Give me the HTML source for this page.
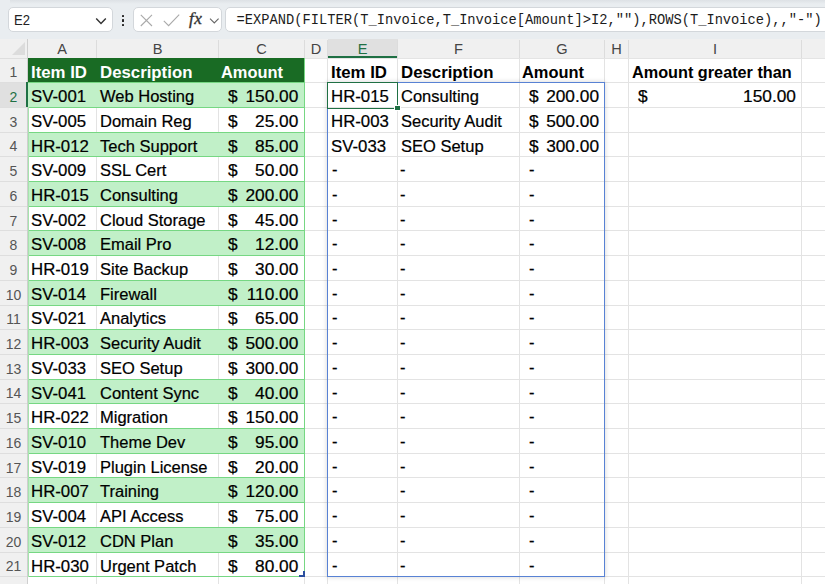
<!DOCTYPE html>
<html lang="en"><head><meta charset="utf-8"><title>Excel – EXPAND FILTER</title>
<style>
html,body{margin:0;padding:0}
body{width:825px;height:584px;overflow:hidden;background:#fff;position:relative;font-family:"Liberation Sans",sans-serif;color:#000}
.abs,.t,.b,.rn,.cl,.hl,.vl,.band{position:absolute}
.t,.b{white-space:nowrap;font-size:17.3px;line-height:20.0px;height:20.0px;transform-origin:0 50%}
.t{-webkit-text-stroke:.22px #000}
.b{font-weight:bold}
.r{transform-origin:100% 50%}
.w{color:#fff}
.rn{left:0;width:27px;text-align:center;font-size:14px;color:#555;line-height:18px;height:18px}
.cl{top:40.2px;text-align:center;font-size:14.6px;color:#444;line-height:18px;height:18px}
.hl{height:1px;background:#e3e3e3}
.vl{width:1px;background:#e3e3e3}
.band{background:#c1f0c8}
#topbar{left:0;top:0;width:825px;height:39px;background:#e9edf0}
#topshade{left:10px;top:0;width:815px;height:4px;background:linear-gradient(#dde1e5,#e9edf0)}
.box{background:#fff;border-radius:5px;border:1px solid #d3d7db;box-sizing:border-box}
#formula{font-family:"Liberation Mono","DejaVu Sans Mono",monospace;font-size:13.74px;white-space:pre;line-height:24px;color:#1c1c1c}
</style></head><body>

<div class="abs" id="topbar"></div><div class="abs" id="topshade"></div>
<div class="abs box" style="left:8.3px;top:7.4px;width:104.6px;height:24.3px"></div>
<div class="abs" style="left:14.3px;top:10.6px;font-size:14px;line-height:18px;color:#222;transform:scaleX(.93);transform-origin:0 50%">E2</div>
<svg class="abs" style="left:94px;top:15.4px" width="14" height="12" viewBox="0 0 14 12"><path d="M2.2 3.6 L7 8.4 L11.8 3.6" fill="none" stroke="#333" stroke-width="1.45"/></svg>
<div class="abs" style="left:121.9px;top:15.1px;width:2.4px;height:2.4px;background:#262626;border-radius:.5px"></div>
<div class="abs" style="left:121.9px;top:19.3px;width:2.4px;height:2.4px;background:#262626;border-radius:.5px"></div>
<div class="abs" style="left:121.9px;top:23.5px;width:2.4px;height:2.4px;background:#262626;border-radius:.5px"></div>
<div class="abs box" style="left:133.4px;top:7.4px;width:88.2px;height:24.3px"></div>
<svg class="abs" style="left:134px;top:7.6px" width="87" height="24" viewBox="0 0 87 24"><path d="M6.8 6.8 L18 18 M18 6.8 L6.8 18" stroke="#a9a9a9" stroke-width="1.1" fill="none"/><path d="M29.8 12.8 L34.6 17.6 L45.2 6.6" stroke="#a9a9a9" stroke-width="1.1" fill="none"/><path d="M76 10.6 L80.3 14.9 L84.6 10.6" stroke="#666" stroke-width="1.1" fill="none"/></svg>
<div class="abs" style="left:188.9px;top:8.8px;font-family:'Liberation Serif',serif;font-style:italic;font-weight:normal;-webkit-text-stroke:.35px #333;font-size:17.2px;line-height:20px;color:#333;letter-spacing:.5px">fx</div>
<div class="abs box" style="left:225.3px;top:7.4px;width:620px;height:24.3px"></div>
<div class="abs" id="formula" style="left:236.6px;top:9px">=EXPAND(FILTER(T_Invoice,T_Invoice[Amount]&gt;I2,&quot;&quot;),ROWS(T_Invoice),,&quot;-&quot;)</div>
<div class="abs" style="left:0;top:39.0px;width:825px;height:19.0px;background:#f0f0f0"></div>
<div class="abs" style="left:0;top:39.0px;width:27.5px;height:545.0px;background:#f0f0f0"></div>
<svg class="abs" style="left:12px;top:42px" width="13" height="13" viewBox="0 0 13 13"><path d="M13 0 V13 H0 Z" fill="#dcdcdc"/></svg>
<div class="abs" style="left:327.7px;top:39.0px;width:70.0px;height:19.0px;background:#e0e0e0;border-bottom:2px solid #1f7044;box-sizing:border-box"></div>
<div class="abs" style="left:0;top:82.7px;width:28.1px;height:24.7px;background:#e0e0e0;border-right:2px solid #1f7044;box-sizing:border-box"></div>
<div class="cl" style="left:27.5px;width:69.0px;color:#444">A</div>
<div class="cl" style="left:96.5px;width:122.2px;color:#444">B</div>
<div class="vl" style="left:96.0px;top:40.0px;height:18.0px;background:#dcdcdc"></div>
<div class="cl" style="left:218.7px;width:85.8px;color:#444">C</div>
<div class="vl" style="left:218.2px;top:40.0px;height:18.0px;background:#dcdcdc"></div>
<div class="cl" style="left:304.5px;width:23.2px;color:#444">D</div>
<div class="vl" style="left:304.0px;top:40.0px;height:18.0px;background:#dcdcdc"></div>
<div class="cl" style="left:327.7px;width:70.0px;color:#1f7044">E</div>
<div class="vl" style="left:327.2px;top:40.0px;height:18.0px;background:#dcdcdc"></div>
<div class="cl" style="left:397.7px;width:121.6px;color:#444">F</div>
<div class="vl" style="left:397.2px;top:40.0px;height:18.0px;background:#dcdcdc"></div>
<div class="cl" style="left:519.3px;width:85.5px;color:#444">G</div>
<div class="vl" style="left:518.8px;top:40.0px;height:18.0px;background:#dcdcdc"></div>
<div class="cl" style="left:604.8px;width:23.7px;color:#444">H</div>
<div class="vl" style="left:604.3px;top:40.0px;height:18.0px;background:#dcdcdc"></div>
<div class="cl" style="left:628.5px;width:172.9px;color:#444">I</div>
<div class="vl" style="left:628.0px;top:40.0px;height:18.0px;background:#dcdcdc"></div>
<div class="cl" style="left:801.4px;width:98.6px;color:#444">J</div>
<div class="vl" style="left:800.9px;top:40.0px;height:18.0px;background:#dcdcdc"></div>
<div class="rn" style="top:63.0px;color:#555">1</div>
<div class="hl" style="left:0;top:57.5px;width:27px;background:#dedede"></div>
<div class="rn" style="top:88.0px;color:#1f7044">2</div>
<div class="hl" style="left:0;top:82.2px;width:27px;background:#dedede"></div>
<div class="rn" style="top:113.0px;color:#555">3</div>
<div class="hl" style="left:0;top:106.9px;width:27px;background:#dedede"></div>
<div class="rn" style="top:137.0px;color:#555">4</div>
<div class="hl" style="left:0;top:131.6px;width:27px;background:#dedede"></div>
<div class="rn" style="top:162.0px;color:#555">5</div>
<div class="hl" style="left:0;top:156.3px;width:27px;background:#dedede"></div>
<div class="rn" style="top:187.0px;color:#555">6</div>
<div class="hl" style="left:0;top:181.0px;width:27px;background:#dedede"></div>
<div class="rn" style="top:212.0px;color:#555">7</div>
<div class="hl" style="left:0;top:205.7px;width:27px;background:#dedede"></div>
<div class="rn" style="top:236.0px;color:#555">8</div>
<div class="hl" style="left:0;top:230.4px;width:27px;background:#dedede"></div>
<div class="rn" style="top:261.0px;color:#555">9</div>
<div class="hl" style="left:0;top:255.1px;width:27px;background:#dedede"></div>
<div class="rn" style="top:286.0px;color:#555">10</div>
<div class="hl" style="left:0;top:279.8px;width:27px;background:#dedede"></div>
<div class="rn" style="top:310.0px;color:#555">11</div>
<div class="hl" style="left:0;top:304.5px;width:27px;background:#dedede"></div>
<div class="rn" style="top:335.0px;color:#555">12</div>
<div class="hl" style="left:0;top:329.2px;width:27px;background:#dedede"></div>
<div class="rn" style="top:360.0px;color:#555">13</div>
<div class="hl" style="left:0;top:353.9px;width:27px;background:#dedede"></div>
<div class="rn" style="top:384.0px;color:#555">14</div>
<div class="hl" style="left:0;top:378.6px;width:27px;background:#dedede"></div>
<div class="rn" style="top:409.0px;color:#555">15</div>
<div class="hl" style="left:0;top:403.3px;width:27px;background:#dedede"></div>
<div class="rn" style="top:434.0px;color:#555">16</div>
<div class="hl" style="left:0;top:428.0px;width:27px;background:#dedede"></div>
<div class="rn" style="top:459.0px;color:#555">17</div>
<div class="hl" style="left:0;top:452.7px;width:27px;background:#dedede"></div>
<div class="rn" style="top:483.0px;color:#555">18</div>
<div class="hl" style="left:0;top:477.4px;width:27px;background:#dedede"></div>
<div class="rn" style="top:508.0px;color:#555">19</div>
<div class="hl" style="left:0;top:502.1px;width:27px;background:#dedede"></div>
<div class="rn" style="top:533.0px;color:#555">20</div>
<div class="hl" style="left:0;top:526.8px;width:27px;background:#dedede"></div>
<div class="rn" style="top:557.0px;color:#555">21</div>
<div class="hl" style="left:0;top:551.5px;width:27px;background:#dedede"></div>
<div class="rn" style="top:582.0px;color:#555">22</div>
<div class="hl" style="left:0;top:576.2px;width:27px;background:#dedede"></div>
<div class="vl" style="left:27px;top:39.0px;height:545.0px;background:#cfcfcf"></div>
<div class="hl" style="left:27.5px;top:57.5px;width:800px;background:#e4e4e4"></div>
<div class="hl" style="left:27.5px;top:82.2px;width:800px"></div>
<div class="hl" style="left:27.5px;top:106.9px;width:800px"></div>
<div class="hl" style="left:27.5px;top:131.6px;width:800px"></div>
<div class="hl" style="left:27.5px;top:156.3px;width:800px"></div>
<div class="hl" style="left:27.5px;top:181.0px;width:800px"></div>
<div class="hl" style="left:27.5px;top:205.7px;width:800px"></div>
<div class="hl" style="left:27.5px;top:230.4px;width:800px"></div>
<div class="hl" style="left:27.5px;top:255.1px;width:800px"></div>
<div class="hl" style="left:27.5px;top:279.8px;width:800px"></div>
<div class="hl" style="left:27.5px;top:304.5px;width:800px"></div>
<div class="hl" style="left:27.5px;top:329.2px;width:800px"></div>
<div class="hl" style="left:27.5px;top:353.9px;width:800px"></div>
<div class="hl" style="left:27.5px;top:378.6px;width:800px"></div>
<div class="hl" style="left:27.5px;top:403.3px;width:800px"></div>
<div class="hl" style="left:27.5px;top:428.0px;width:800px"></div>
<div class="hl" style="left:27.5px;top:452.7px;width:800px"></div>
<div class="hl" style="left:27.5px;top:477.4px;width:800px"></div>
<div class="hl" style="left:27.5px;top:502.1px;width:800px"></div>
<div class="hl" style="left:27.5px;top:526.8px;width:800px"></div>
<div class="hl" style="left:27.5px;top:551.5px;width:800px"></div>
<div class="hl" style="left:27.5px;top:576.2px;width:800px"></div>
<div class="hl" style="left:27.5px;top:600.9px;width:800px"></div>
<div class="vl" style="left:96.0px;top:58.0px;height:526.0px"></div>
<div class="vl" style="left:218.2px;top:58.0px;height:526.0px"></div>
<div class="vl" style="left:304.0px;top:58.0px;height:526.0px"></div>
<div class="vl" style="left:327.2px;top:58.0px;height:526.0px"></div>
<div class="vl" style="left:397.2px;top:58.0px;height:526.0px"></div>
<div class="vl" style="left:518.8px;top:58.0px;height:526.0px"></div>
<div class="vl" style="left:604.3px;top:58.0px;height:526.0px"></div>
<div class="vl" style="left:628.0px;top:58.0px;height:526.0px"></div>
<div class="vl" style="left:800.9px;top:58.0px;height:526.0px"></div>
<div class="abs" style="left:28.0px;top:58.0px;width:276.5px;height:24.7px;background:#196b24"></div>
<div class="band" style="left:28.0px;top:82.7px;width:276.5px;height:24.7px"></div>
<div class="band" style="left:28.0px;top:132.1px;width:276.5px;height:24.7px"></div>
<div class="band" style="left:28.0px;top:181.5px;width:276.5px;height:24.7px"></div>
<div class="band" style="left:28.0px;top:230.9px;width:276.5px;height:24.7px"></div>
<div class="band" style="left:28.0px;top:280.3px;width:276.5px;height:24.7px"></div>
<div class="band" style="left:28.0px;top:329.7px;width:276.5px;height:24.7px"></div>
<div class="band" style="left:28.0px;top:379.1px;width:276.5px;height:24.7px"></div>
<div class="band" style="left:28.0px;top:428.5px;width:276.5px;height:24.7px"></div>
<div class="band" style="left:28.0px;top:477.9px;width:276.5px;height:24.7px"></div>
<div class="band" style="left:28.0px;top:527.3px;width:276.5px;height:24.7px"></div>
<div class="hl" style="left:28.0px;top:82.2px;width:277.0px;background:#76d783"></div>
<div class="hl" style="left:28.0px;top:106.9px;width:277.0px;background:#76d783"></div>
<div class="hl" style="left:28.0px;top:131.6px;width:277.0px;background:#76d783"></div>
<div class="hl" style="left:28.0px;top:156.3px;width:277.0px;background:#76d783"></div>
<div class="hl" style="left:28.0px;top:181.0px;width:277.0px;background:#76d783"></div>
<div class="hl" style="left:28.0px;top:205.7px;width:277.0px;background:#76d783"></div>
<div class="hl" style="left:28.0px;top:230.4px;width:277.0px;background:#76d783"></div>
<div class="hl" style="left:28.0px;top:255.1px;width:277.0px;background:#76d783"></div>
<div class="hl" style="left:28.0px;top:279.8px;width:277.0px;background:#76d783"></div>
<div class="hl" style="left:28.0px;top:304.5px;width:277.0px;background:#76d783"></div>
<div class="hl" style="left:28.0px;top:329.2px;width:277.0px;background:#76d783"></div>
<div class="hl" style="left:28.0px;top:353.9px;width:277.0px;background:#76d783"></div>
<div class="hl" style="left:28.0px;top:378.6px;width:277.0px;background:#76d783"></div>
<div class="hl" style="left:28.0px;top:403.3px;width:277.0px;background:#76d783"></div>
<div class="hl" style="left:28.0px;top:428.0px;width:277.0px;background:#76d783"></div>
<div class="hl" style="left:28.0px;top:452.7px;width:277.0px;background:#76d783"></div>
<div class="hl" style="left:28.0px;top:477.4px;width:277.0px;background:#76d783"></div>
<div class="hl" style="left:28.0px;top:502.1px;width:277.0px;background:#76d783"></div>
<div class="hl" style="left:28.0px;top:526.8px;width:277.0px;background:#76d783"></div>
<div class="hl" style="left:28.0px;top:551.5px;width:277.0px;background:#76d783"></div>
<div class="hl" style="left:28.0px;top:576.2px;width:277.0px;background:#76d783"></div>
<div class="vl" style="left:304.0px;top:58.0px;height:518.7px;background:#76d783"></div>
<div class="vl" style="left:27.5px;top:107.4px;height:469.3px;background:#a6e3ad"></div>
<svg class="abs" style="left:298.5px;top:570.5px" width="6" height="6" viewBox="0 0 6 6"><path d="M4 0 H6 V6 H0 V4 H4 Z" fill="#2b4f9e"/></svg>
<div class="b w" style="left:30.8px;top:62.00px;transform:scaleX(0.972)">Item ID</div>
<div class="b w" style="left:100.1px;top:62.00px;transform:scaleX(0.972)">Description</div>
<div class="b w" style="left:221.2px;top:62.00px;transform:scaleX(0.950)">Amount</div>
<div class="t" style="left:30.6px;top:86.00px;transform:scaleX(0.972)">SV-001</div>
<div class="t" style="left:100.1px;top:86.00px;transform:scaleX(0.955)">Web Hosting</div>
<div class="t" style="left:228.0px;top:86.00px;transform:scaleX(1.000)">$</div>
<div class="t r" style="right:526.7px;top:86.00px;transform:scaleX(1.000)">150.00</div>
<div class="t" style="left:30.6px;top:111.00px;transform:scaleX(0.972)">SV-005</div>
<div class="t" style="left:100.1px;top:111.00px;transform:scaleX(0.955)">Domain Reg</div>
<div class="t" style="left:228.0px;top:111.00px;transform:scaleX(1.000)">$</div>
<div class="t r" style="right:526.7px;top:111.00px;transform:scaleX(1.000)">25.00</div>
<div class="t" style="left:30.6px;top:136.00px;transform:scaleX(0.972)">HR-012</div>
<div class="t" style="left:100.1px;top:136.00px;transform:scaleX(0.955)">Tech Support</div>
<div class="t" style="left:228.0px;top:136.00px;transform:scaleX(1.000)">$</div>
<div class="t r" style="right:526.7px;top:136.00px;transform:scaleX(1.000)">85.00</div>
<div class="t" style="left:30.6px;top:160.00px;transform:scaleX(0.972)">SV-009</div>
<div class="t" style="left:100.1px;top:160.00px;transform:scaleX(0.955)">SSL Cert</div>
<div class="t" style="left:228.0px;top:160.00px;transform:scaleX(1.000)">$</div>
<div class="t r" style="right:526.7px;top:160.00px;transform:scaleX(1.000)">50.00</div>
<div class="t" style="left:30.6px;top:185.00px;transform:scaleX(0.972)">HR-015</div>
<div class="t" style="left:100.1px;top:185.00px;transform:scaleX(0.955)">Consulting</div>
<div class="t" style="left:228.0px;top:185.00px;transform:scaleX(1.000)">$</div>
<div class="t r" style="right:526.7px;top:185.00px;transform:scaleX(1.000)">200.00</div>
<div class="t" style="left:30.6px;top:210.00px;transform:scaleX(0.972)">SV-002</div>
<div class="t" style="left:100.1px;top:210.00px;transform:scaleX(0.955)">Cloud Storage</div>
<div class="t" style="left:228.0px;top:210.00px;transform:scaleX(1.000)">$</div>
<div class="t r" style="right:526.7px;top:210.00px;transform:scaleX(1.000)">45.00</div>
<div class="t" style="left:30.6px;top:234.00px;transform:scaleX(0.972)">SV-008</div>
<div class="t" style="left:100.1px;top:234.00px;transform:scaleX(0.955)">Email Pro</div>
<div class="t" style="left:228.0px;top:234.00px;transform:scaleX(1.000)">$</div>
<div class="t r" style="right:526.7px;top:234.00px;transform:scaleX(1.000)">12.00</div>
<div class="t" style="left:30.6px;top:259.00px;transform:scaleX(0.972)">HR-019</div>
<div class="t" style="left:100.1px;top:259.00px;transform:scaleX(0.955)">Site Backup</div>
<div class="t" style="left:228.0px;top:259.00px;transform:scaleX(1.000)">$</div>
<div class="t r" style="right:526.7px;top:259.00px;transform:scaleX(1.000)">30.00</div>
<div class="t" style="left:30.6px;top:284.00px;transform:scaleX(0.972)">SV-014</div>
<div class="t" style="left:100.1px;top:284.00px;transform:scaleX(0.955)">Firewall</div>
<div class="t" style="left:228.0px;top:284.00px;transform:scaleX(1.000)">$</div>
<div class="t r" style="right:526.7px;top:284.00px;transform:scaleX(1.000)">110.00</div>
<div class="t" style="left:30.6px;top:308.00px;transform:scaleX(0.972)">SV-021</div>
<div class="t" style="left:100.1px;top:308.00px;transform:scaleX(0.955)">Analytics</div>
<div class="t" style="left:228.0px;top:308.00px;transform:scaleX(1.000)">$</div>
<div class="t r" style="right:526.7px;top:308.00px;transform:scaleX(1.000)">65.00</div>
<div class="t" style="left:30.6px;top:333.00px;transform:scaleX(0.972)">HR-003</div>
<div class="t" style="left:100.1px;top:333.00px;transform:scaleX(0.955)">Security Audit</div>
<div class="t" style="left:228.0px;top:333.00px;transform:scaleX(1.000)">$</div>
<div class="t r" style="right:526.7px;top:333.00px;transform:scaleX(1.000)">500.00</div>
<div class="t" style="left:30.6px;top:358.00px;transform:scaleX(0.972)">SV-033</div>
<div class="t" style="left:100.1px;top:358.00px;transform:scaleX(0.955)">SEO Setup</div>
<div class="t" style="left:228.0px;top:358.00px;transform:scaleX(1.000)">$</div>
<div class="t r" style="right:526.7px;top:358.00px;transform:scaleX(1.000)">300.00</div>
<div class="t" style="left:30.6px;top:383.00px;transform:scaleX(0.972)">SV-041</div>
<div class="t" style="left:100.1px;top:383.00px;transform:scaleX(0.955)">Content Sync</div>
<div class="t" style="left:228.0px;top:383.00px;transform:scaleX(1.000)">$</div>
<div class="t r" style="right:526.7px;top:383.00px;transform:scaleX(1.000)">40.00</div>
<div class="t" style="left:30.6px;top:407.00px;transform:scaleX(0.972)">HR-022</div>
<div class="t" style="left:100.1px;top:407.00px;transform:scaleX(0.955)">Migration</div>
<div class="t" style="left:228.0px;top:407.00px;transform:scaleX(1.000)">$</div>
<div class="t r" style="right:526.7px;top:407.00px;transform:scaleX(1.000)">150.00</div>
<div class="t" style="left:30.6px;top:432.00px;transform:scaleX(0.972)">SV-010</div>
<div class="t" style="left:100.1px;top:432.00px;transform:scaleX(0.955)">Theme Dev</div>
<div class="t" style="left:228.0px;top:432.00px;transform:scaleX(1.000)">$</div>
<div class="t r" style="right:526.7px;top:432.00px;transform:scaleX(1.000)">95.00</div>
<div class="t" style="left:30.6px;top:457.00px;transform:scaleX(0.972)">SV-019</div>
<div class="t" style="left:100.1px;top:457.00px;transform:scaleX(0.955)">Plugin License</div>
<div class="t" style="left:228.0px;top:457.00px;transform:scaleX(1.000)">$</div>
<div class="t r" style="right:526.7px;top:457.00px;transform:scaleX(1.000)">20.00</div>
<div class="t" style="left:30.6px;top:481.00px;transform:scaleX(0.972)">HR-007</div>
<div class="t" style="left:100.1px;top:481.00px;transform:scaleX(0.955)">Training</div>
<div class="t" style="left:228.0px;top:481.00px;transform:scaleX(1.000)">$</div>
<div class="t r" style="right:526.7px;top:481.00px;transform:scaleX(1.000)">120.00</div>
<div class="t" style="left:30.6px;top:506.00px;transform:scaleX(0.972)">SV-004</div>
<div class="t" style="left:100.1px;top:506.00px;transform:scaleX(0.955)">API Access</div>
<div class="t" style="left:228.0px;top:506.00px;transform:scaleX(1.000)">$</div>
<div class="t r" style="right:526.7px;top:506.00px;transform:scaleX(1.000)">75.00</div>
<div class="t" style="left:30.6px;top:531.00px;transform:scaleX(0.972)">SV-012</div>
<div class="t" style="left:100.1px;top:531.00px;transform:scaleX(0.955)">CDN Plan</div>
<div class="t" style="left:228.0px;top:531.00px;transform:scaleX(1.000)">$</div>
<div class="t r" style="right:526.7px;top:531.00px;transform:scaleX(1.000)">35.00</div>
<div class="t" style="left:30.6px;top:556.00px;transform:scaleX(0.972)">HR-030</div>
<div class="t" style="left:100.1px;top:556.00px;transform:scaleX(0.955)">Urgent Patch</div>
<div class="t" style="left:228.0px;top:556.00px;transform:scaleX(1.000)">$</div>
<div class="t r" style="right:526.7px;top:556.00px;transform:scaleX(1.000)">80.00</div>
<div class="b" style="left:331.3px;top:62.00px;transform:scaleX(0.972)">Item ID</div>
<div class="b" style="left:400.5px;top:62.00px;transform:scaleX(0.972)">Description</div>
<div class="b" style="left:522.0px;top:62.00px;transform:scaleX(0.950)">Amount</div>
<div class="t" style="left:331.3px;top:86.00px;transform:scaleX(0.972)">HR-015</div>
<div class="t" style="left:400.5px;top:86.00px;transform:scaleX(0.955)">Consulting</div>
<div class="t" style="left:529.0px;top:86.00px;transform:scaleX(1.000)">$</div>
<div class="t r" style="right:226.0px;top:86.00px;transform:scaleX(1.000)">200.00</div>
<div class="t" style="left:331.3px;top:111.00px;transform:scaleX(0.972)">HR-003</div>
<div class="t" style="left:400.5px;top:111.00px;transform:scaleX(0.955)">Security Audit</div>
<div class="t" style="left:529.0px;top:111.00px;transform:scaleX(1.000)">$</div>
<div class="t r" style="right:226.0px;top:111.00px;transform:scaleX(1.000)">500.00</div>
<div class="t" style="left:331.3px;top:136.00px;transform:scaleX(0.972)">SV-033</div>
<div class="t" style="left:400.5px;top:136.00px;transform:scaleX(0.955)">SEO Setup</div>
<div class="t" style="left:529.0px;top:136.00px;transform:scaleX(1.000)">$</div>
<div class="t r" style="right:226.0px;top:136.00px;transform:scaleX(1.000)">300.00</div>
<div class="t" style="left:331.6px;top:160.00px;transform:scaleX(0.950);margin-top:-1px">-</div>
<div class="t" style="left:400.4px;top:160.00px;transform:scaleX(0.950);margin-top:-1px">-</div>
<div class="t" style="left:528.8px;top:160.00px;transform:scaleX(0.950);margin-top:-1px">-</div>
<div class="t" style="left:331.6px;top:185.00px;transform:scaleX(0.950);margin-top:-1px">-</div>
<div class="t" style="left:400.4px;top:185.00px;transform:scaleX(0.950);margin-top:-1px">-</div>
<div class="t" style="left:528.8px;top:185.00px;transform:scaleX(0.950);margin-top:-1px">-</div>
<div class="t" style="left:331.6px;top:210.00px;transform:scaleX(0.950);margin-top:-1px">-</div>
<div class="t" style="left:400.4px;top:210.00px;transform:scaleX(0.950);margin-top:-1px">-</div>
<div class="t" style="left:528.8px;top:210.00px;transform:scaleX(0.950);margin-top:-1px">-</div>
<div class="t" style="left:331.6px;top:234.00px;transform:scaleX(0.950);margin-top:-1px">-</div>
<div class="t" style="left:400.4px;top:234.00px;transform:scaleX(0.950);margin-top:-1px">-</div>
<div class="t" style="left:528.8px;top:234.00px;transform:scaleX(0.950);margin-top:-1px">-</div>
<div class="t" style="left:331.6px;top:259.00px;transform:scaleX(0.950);margin-top:-1px">-</div>
<div class="t" style="left:400.4px;top:259.00px;transform:scaleX(0.950);margin-top:-1px">-</div>
<div class="t" style="left:528.8px;top:259.00px;transform:scaleX(0.950);margin-top:-1px">-</div>
<div class="t" style="left:331.6px;top:284.00px;transform:scaleX(0.950);margin-top:-1px">-</div>
<div class="t" style="left:400.4px;top:284.00px;transform:scaleX(0.950);margin-top:-1px">-</div>
<div class="t" style="left:528.8px;top:284.00px;transform:scaleX(0.950);margin-top:-1px">-</div>
<div class="t" style="left:331.6px;top:308.00px;transform:scaleX(0.950);margin-top:-1px">-</div>
<div class="t" style="left:400.4px;top:308.00px;transform:scaleX(0.950);margin-top:-1px">-</div>
<div class="t" style="left:528.8px;top:308.00px;transform:scaleX(0.950);margin-top:-1px">-</div>
<div class="t" style="left:331.6px;top:333.00px;transform:scaleX(0.950);margin-top:-1px">-</div>
<div class="t" style="left:400.4px;top:333.00px;transform:scaleX(0.950);margin-top:-1px">-</div>
<div class="t" style="left:528.8px;top:333.00px;transform:scaleX(0.950);margin-top:-1px">-</div>
<div class="t" style="left:331.6px;top:358.00px;transform:scaleX(0.950);margin-top:-1px">-</div>
<div class="t" style="left:400.4px;top:358.00px;transform:scaleX(0.950);margin-top:-1px">-</div>
<div class="t" style="left:528.8px;top:358.00px;transform:scaleX(0.950);margin-top:-1px">-</div>
<div class="t" style="left:331.6px;top:383.00px;transform:scaleX(0.950);margin-top:-1px">-</div>
<div class="t" style="left:400.4px;top:383.00px;transform:scaleX(0.950);margin-top:-1px">-</div>
<div class="t" style="left:528.8px;top:383.00px;transform:scaleX(0.950);margin-top:-1px">-</div>
<div class="t" style="left:331.6px;top:407.00px;transform:scaleX(0.950);margin-top:-1px">-</div>
<div class="t" style="left:400.4px;top:407.00px;transform:scaleX(0.950);margin-top:-1px">-</div>
<div class="t" style="left:528.8px;top:407.00px;transform:scaleX(0.950);margin-top:-1px">-</div>
<div class="t" style="left:331.6px;top:432.00px;transform:scaleX(0.950);margin-top:-1px">-</div>
<div class="t" style="left:400.4px;top:432.00px;transform:scaleX(0.950);margin-top:-1px">-</div>
<div class="t" style="left:528.8px;top:432.00px;transform:scaleX(0.950);margin-top:-1px">-</div>
<div class="t" style="left:331.6px;top:457.00px;transform:scaleX(0.950);margin-top:-1px">-</div>
<div class="t" style="left:400.4px;top:457.00px;transform:scaleX(0.950);margin-top:-1px">-</div>
<div class="t" style="left:528.8px;top:457.00px;transform:scaleX(0.950);margin-top:-1px">-</div>
<div class="t" style="left:331.6px;top:481.00px;transform:scaleX(0.950);margin-top:-1px">-</div>
<div class="t" style="left:400.4px;top:481.00px;transform:scaleX(0.950);margin-top:-1px">-</div>
<div class="t" style="left:528.8px;top:481.00px;transform:scaleX(0.950);margin-top:-1px">-</div>
<div class="t" style="left:331.6px;top:506.00px;transform:scaleX(0.950);margin-top:-1px">-</div>
<div class="t" style="left:400.4px;top:506.00px;transform:scaleX(0.950);margin-top:-1px">-</div>
<div class="t" style="left:528.8px;top:506.00px;transform:scaleX(0.950);margin-top:-1px">-</div>
<div class="t" style="left:331.6px;top:531.00px;transform:scaleX(0.950);margin-top:-1px">-</div>
<div class="t" style="left:400.4px;top:531.00px;transform:scaleX(0.950);margin-top:-1px">-</div>
<div class="t" style="left:528.8px;top:531.00px;transform:scaleX(0.950);margin-top:-1px">-</div>
<div class="t" style="left:331.6px;top:556.00px;transform:scaleX(0.950);margin-top:-1px">-</div>
<div class="t" style="left:400.4px;top:556.00px;transform:scaleX(0.950);margin-top:-1px">-</div>
<div class="t" style="left:528.8px;top:556.00px;transform:scaleX(0.950);margin-top:-1px">-</div>
<div class="b" style="left:632.2px;top:62.00px;transform:scaleX(0.940)">Amount greater than</div>
<div class="t" style="left:638.0px;top:86.00px;transform:scaleX(1.000)">$</div>
<div class="t r" style="right:29.1px;top:86.00px;transform:scaleX(1.000)">150.00</div>
<div class="abs" style="left:327.3px;top:82.2px;width:278.0px;height:495.2px;border:1.5px solid #5882d4;border-left-width:1.9px;box-sizing:border-box;box-shadow:0 0 5px rgba(0,0,0,.17)"></div>
<div class="abs" style="left:326.8px;top:81.7px;width:71.7px;height:27.1px;border:1.85px solid #1f7044;box-sizing:border-box"></div>
<div class="abs" style="left:394.0px;top:104.5px;width:4.6px;height:4.4px;background:#1f7044;border:1px solid #fff"></div>
<div class="abs" style="left:26.2px;top:82.4px;width:1.9px;height:25.0px;background:#1f7044"></div>
</body></html>
